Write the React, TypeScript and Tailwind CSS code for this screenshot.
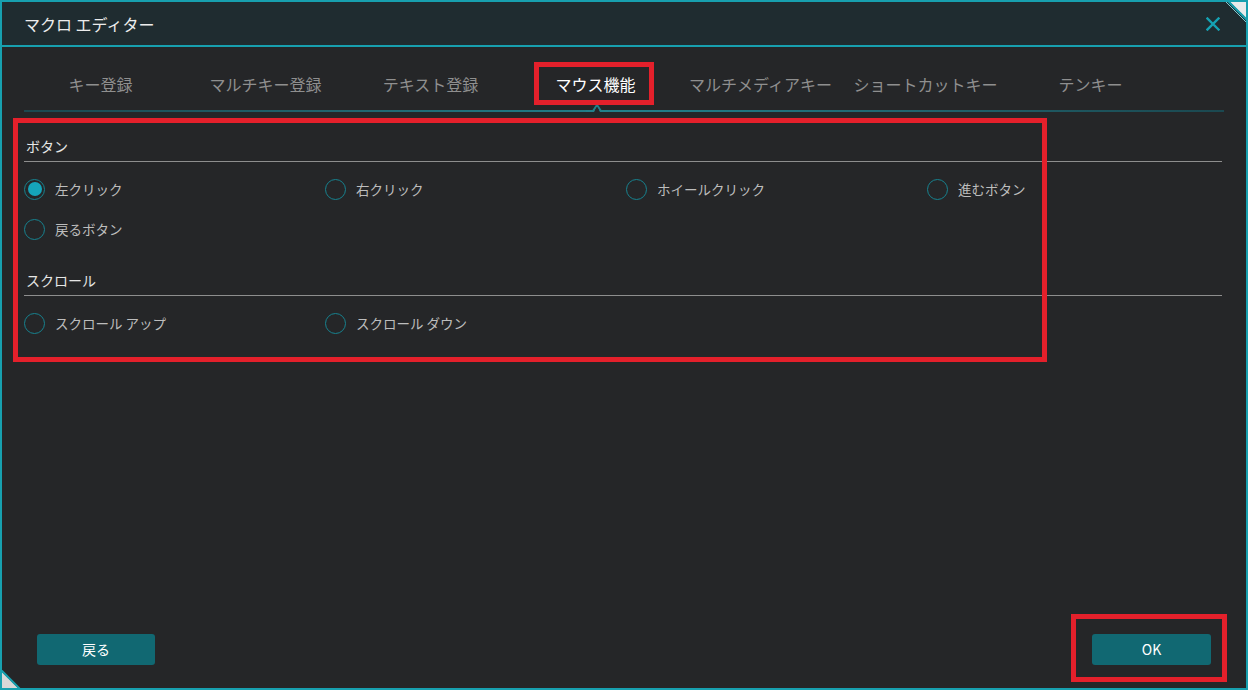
import React from 'react';

const tabs = ['キー登録', 'マルチキー登録', 'テキスト登録', 'マウス機能', 'マルチメディアキー', 'ショートカットキー', 'テンキー'];

function Radio({ label, checked = false }: { label: string; checked?: boolean }) {
  return (
    <div className="w-[301px] h-[40px] flex items-center gap-[10px]">
      <span className="w-[21px] h-[21px] rounded-full border-[1.5px] border-[#17828f] flex items-center justify-center shrink-0">
        {checked && <span className="w-[14px] h-[14px] rounded-full bg-[#15a5ba]" />}
      </span>
      <span className="text-[13.5px] text-[#bdbdbd]">{label}</span>
    </div>
  );
}

function Section({ title, children }: { title: string; children: React.ReactNode }) {
  return (
    <div>
      <div className="h-[20px] leading-[20px] text-[14px] text-[#e6e6e6] pl-[2px]">{title}</div>
      <div className="mt-[5px] h-px w-[1198px] bg-[#8e8e8e]" />
      <div className="mt-[7px] flex flex-wrap w-[1204px]">{children}</div>
    </div>
  );
}

export default function App() {
  return (
    <div
      className="relative w-[1248px] h-[690px] border-2 border-[#17a0af] bg-[#252628] flex flex-col overflow-hidden"
      style={{ fontFamily: '"Noto Sans CJK JP", "Noto Sans", sans-serif' }}
    >
      {/* title bar */}
      <div className="h-[45px] shrink-0 bg-[#1f2c30] border-b-2 border-[#17a0af] flex items-center justify-between pl-[22px] pr-[26px]">
        <span className="text-[16px] text-[#ececec]">マクロ エディター</span>
        <svg width="14" height="14" viewBox="0 0 14 14" className="mt-[1px]">
          <path d="M1.5 1.5 L12.5 12.5 M12.5 1.5 L1.5 12.5" stroke="#15a2b3" strokeWidth="2.4" strokeLinecap="square" />
        </svg>
      </div>

      {/* tabs */}
      <div className="pt-[17px] pl-[16px] flex">
        {tabs.map((t) => (
          <div
            key={t}
            className={`w-[165px] h-[40px] flex items-center justify-center text-[16px] ${
              t === 'マウス機能' ? 'text-white' : 'text-[#8f8f8f]'
            }`}
          >
            {t}
          </div>
        ))}
      </div>
      <div className="relative mt-[6px] ml-[22px] w-[1200px] h-[2px] bg-gradient-to-r from-[#1b4850] via-[#22808b] to-[#1b4850]">
        <svg width="22" height="10" viewBox="0 0 22 10" className="absolute left-[562px] top-[-8px]">
          <path d="M0 9 L7 9 L11 3 L15 9 L22 9" fill="none" stroke="#22808b" strokeWidth="2" />
          <path d="M8 10 L11 5 L14 10 Z" fill="#252628" />
        </svg>
      </div>

      {/* content */}
      <div className="pl-[22px] pt-[24px]">
        <Section title="ボタン">
          <Radio label="左クリック" checked />
          <Radio label="右クリック" />
          <Radio label="ホイールクリック" />
          <Radio label="進むボタン" />
          <Radio label="戻るボタン" />
        </Section>
        <div className="mt-[21px]">
          <Section title="スクロール">
            <Radio label="スクロール アップ" />
            <Radio label="スクロール ダウン" />
          </Section>
        </div>
      </div>

      <div className="flex-1" />

      {/* footer buttons */}
      <div className="flex justify-between px-[35px] mb-[23px]">
        <button className="w-[118px] h-[31px] rounded-[3px] bg-[#116872] text-white text-[14px]">戻る</button>
        <button className="w-[119px] h-[31px] rounded-[3px] bg-[#116872] text-white text-[14px]">OK</button>
      </div>

      {/* corner cuts */}
      <svg width="24" height="24" viewBox="0 0 24 24" className="absolute right-[-2px] top-[-2px]">
        <path d="M4 0 L24 20 L24 0 Z" fill="#e8eaeb" />
        <path d="M3 0 L24 21" stroke="#17a0af" strokeWidth="2" />
        <path d="M0 0 L24 24" stroke="#7fcbd4" strokeWidth="1" />
      </svg>
      <svg width="24" height="24" viewBox="0 0 24 24" className="absolute left-[-2px] bottom-[-2px]">
        <path d="M0 4 L20 24 L0 24 Z" fill="#d8d8d8" />
        <path d="M0 3 L21 24" stroke="#17a0af" strokeWidth="2" />
      </svg>

      {/* red annotation boxes */}
      <div className="absolute left-[532px] top-[60px] w-[120px] h-[43px] border-[5px] border-[#e4202b]" />
      <div className="absolute left-[11px] top-[116px] w-[1034px] h-[244px] border-[5px] border-[#e4202b]" />
      <div className="absolute left-[1069px] top-[612px] w-[156px] h-[68px] border-[5px] border-[#e4202b]" />
    </div>
  );
}
